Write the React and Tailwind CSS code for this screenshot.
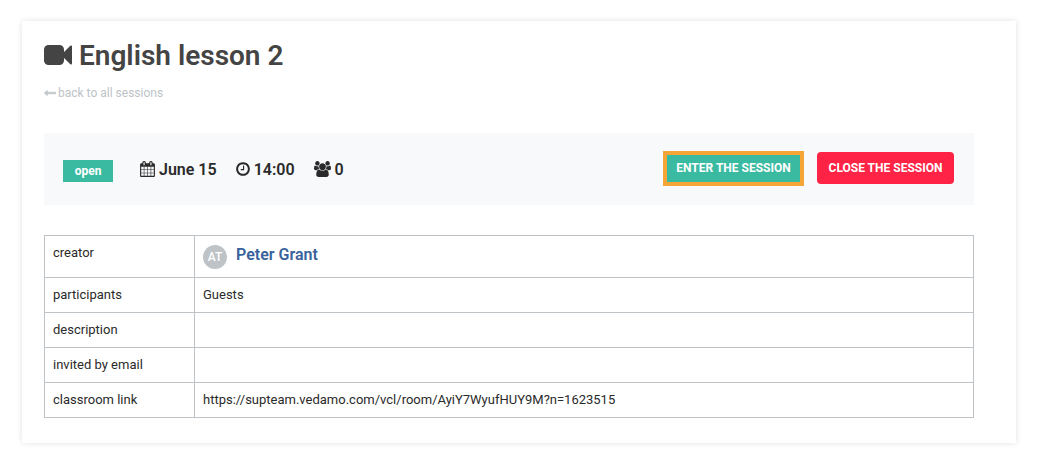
const VIDEO =
  'M1792 352v1088q0 42-39 59-13 5-25 5-27 0-45-19l-403-403v166q0 119-84.5 203.5t-203.5 84.5h-704q-119 0-203.5-84.5t-84.5-203.5v-704q0-119 84.5-203.5t203.5-84.5h704q119 0 203.5 84.5t84.5 203.5v165l403-402q18-19 45-19 12 0 25 5 39 17 39 59z';
const ARROW =
  'M1792 800v192q0 14-9 23t-23 9h-1248v224q0 21-19 29t-35-5l-384-350q-10-10-10-23 0-14 10-24l384-354q16-14 35-6 19 9 19 29v224h1248q14 0 23 9t9 23z';
const CALENDAR =
  'M192 1664h288v-288h-288v288zm352 0h320v-288h-320v288zm-352-352h288v-320h-288v320zm352 0h320v-320h-320v320zm-352-384h288v-288h-288v288zm736 736h320v-288h-320v288zm-384-736h320v-288h-320v288zm768 736h288v-288h-288v288zm-384-352h320v-320h-320v320zm-352-864v-288q0-13-9.5-22.5t-22.5-9.5h-64q-13 0-22.5 9.5t-9.5 22.5v288q0 13 9.5 22.5t22.5 9.5h64q13 0 22.5-9.5t9.5-22.5zm736 864h288v-320h-288v320zm-384-384h320v-288h-320v288zm384 0h288v-288h-288v288zm32-480v-288q0-13-9.5-22.5t-22.5-9.5h-64q-13 0-22.5 9.5t-9.5 22.5v288q0 13 9.5 22.5t22.5 9.5h64q13 0 22.5-9.5t9.5-22.5zm384-64v1280q0 52-38 90t-90 38h-1408q-52 0-90-38t-38-90v-1280q0-52 38-90t90-38h128v-96q0-66 47-113t113-47h64q66 0 113 47t47 113v96h384v-96q0-66 47-113t113-47h64q66 0 113 47t47 113v96h128q52 0 90 38t38 90z';
const CLOCK =
  'M1024 544v448q0 14-9 23t-23 9h-320q-14 0-23-9t-9-23v-64q0-14 9-23t23-9h224v-352q0-14 9-23t23-9h64q14 0 23 9t9 23zm416 352q0-148-73-273t-198-198-273-73-273 73-198 198-73 273 73 273 198 198 273 73 273-73 198-198 73-273zm224 0q0 209-103 385.5t-279.5 279.5-385.5 103-385.5-103-279.5-279.5-103-385.5 103-385.5 279.5-279.5 385.5-103 385.5 103 279.5 279.5 103 385.5z';
const USERS =
  'M593 896q-162 5-265 128h-134q-82 0-138-40.5t-56-118.5q0-353 124-353 6 0 43.5 21t97.5 42.5 119 21.5q67 0 133-23-5 37-5 66 0 139 81 256zm1071 637q0 120-73 189.5t-194 69.5h-874q-121 0-194-69.5t-73-189.5q0-53 3.5-103.5t14-109 26.5-108.5 43-97.5 62-81 85.5-53.5 111.5-20q10 0 43 21.5t73 48 107 48 135 21.5 135-21.5 107-48 73-48 43-21.5q61 0 111.5 20t85.5 53.5 62 81 43 97.5 26.5 108.5 14 109 3.5 103.5zm-1024-1277q0 106-75 181t-181 75-181-75-75-181 75-181 181-75 181 75 75 181zm704 384q0 159-112.5 271.5t-271.5 112.5-271.5-112.5-112.5-271.5 112.5-271.5 271.5-112.5 271.5 112.5 112.5 271.5zm576 225q0 78-56 118.5t-138 40.5h-134q-103-123-265-128 81-117 81-256 0-29-5-66 66 23 133 23 59 0 119-21.5t97.5-42.5 43.5-21q124 0 124 353zm-128-609q0 106-75 181t-181 75-181-75-75-181 75-181 181-75 181 75 75 181z';

function Icon({ path, viewBox = '0 0 1792 1792', className }) {
  return (
    <svg viewBox={viewBox} className={className} fill="currentColor" aria-hidden="true">
      <path d={path} />
    </svg>
  );
}

function Row({ label, children }) {
  return (
    <tr>
      <th scope="row" className="w-[150px] border border-[#bdc3c7] p-2 text-left align-top font-normal">
        {label}
      </th>
      <td className="border border-[#bdc3c7] p-2 align-top">{children}</td>
    </tr>
  );
}

export default function App() {
  return (
    <div className="bg-white px-[22px] py-[21px] font-['Roboto',sans-serif] text-[13px] leading-[18px] text-[#2a2a2a]">
      <main className="bg-white pt-[17px] pr-[42px] pb-[25px] pl-[22px] shadow-[0_0_6px_rgba(0,0,0,0.12)]">
        <h1 className="flex items-center gap-[7px] text-[28px] leading-9 font-semibold text-[#444]">
          <Icon path={VIDEO} className="mb-0.5 size-7" />
          English lesson 2
        </h1>
        <a href="#sessions" className="mt-[11px] flex w-fit items-center gap-0.5 text-[12px] leading-4 text-[#bdc3c7]">
          <Icon path={ARROW} className="size-3 stroke-current stroke-[80]" />
          back to all sessions
        </a>

        <section className="mt-8 flex h-[72px] items-center justify-between bg-[#f8f9fb] pr-5 pl-[19px]">
          <div className="flex items-start pt-[3px] text-[16px] leading-5 font-semibold">
            <span className="mr-[27px] min-w-[50px] bg-[#3bbaa2] px-[11px] text-center text-[12px] leading-[22px] font-bold text-white">
              open
            </span>
            <span className="mr-[19px] flex items-center gap-1">
              <Icon path={CALENDAR} viewBox="64 0 1664 1792" className="mb-0.5 h-4 w-[15px]" />
              June 15
            </span>
            <span className="mr-[19px] flex items-center gap-1">
              <Icon path={CLOCK} viewBox="128 0 1536 1792" className="mb-0.5 h-4 w-[14px]" />
              14:00
            </span>
            <span className="flex items-center gap-1">
              <Icon path={USERS} viewBox="0 0 1920 1792" className="mb-0.5 h-4 w-[17px]" />
              0
            </span>
          </div>
          <div className="flex items-center gap-[13px] pb-0.5 text-[12px] font-bold text-white">
            <button type="button" className="h-[35px] min-w-[141px] border-4 border-[#f5a536] bg-[#3bbaa2] px-[9px]">
              ENTER THE SESSION
            </button>
            <button type="button" className="h-8 min-w-[137px] rounded bg-[#ff2446] px-[11px]">
              CLOSE THE SESSION
            </button>
          </div>
        </section>

        <table className="mt-[30px] w-full border-collapse">
          <tbody>
            <Row label="creator">
              <div className="flex items-center gap-[9px] pt-px">
                <span className="flex size-6 items-center justify-center rounded-full bg-[#bdc3c7] text-[12px] font-medium text-white">
                  AT
                </span>
                <a href="#creator" className="pb-1 text-[16px] font-semibold text-[#37629b]">
                  Peter Grant
                </a>
              </div>
            </Row>
            <Row label="participants">Guests</Row>
            <Row label="description" />
            <Row label="invited by email" />
            <Row label="classroom link">https://supteam.vedamo.com/vcl/room/AyiY7WyufHUY9M?n=1623515</Row>
          </tbody>
        </table>
      </main>
    </div>
  );
}
